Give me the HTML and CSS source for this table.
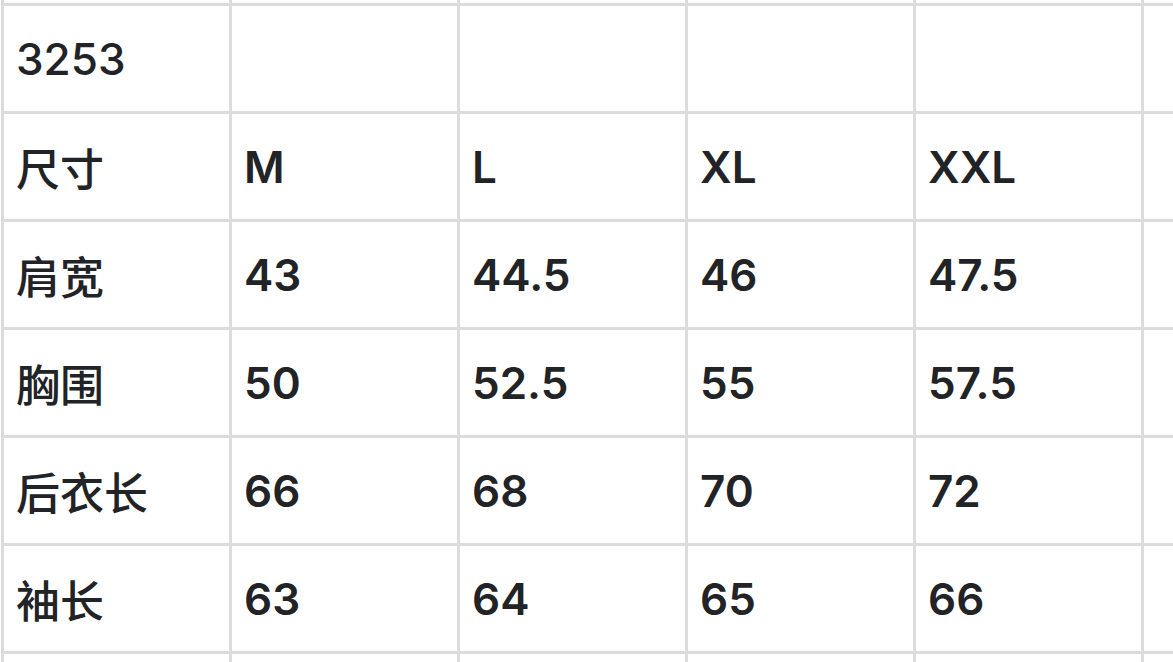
FILE: index.html
```html
<!DOCTYPE html>
<html lang="zh">
<head>
<meta charset="utf-8">
<link rel="stylesheet" href="styles.css">
</head>
<body>
<div class="frame">
<table class="size-table">
  <tr><td></td><td></td><td></td><td></td><td></td><td></td></tr>
  <tr><td class="code">3253</td><td></td><td></td><td></td><td></td><td></td></tr>
  <tr><td class="cjk">尺寸</td><td>M</td><td>L</td><td>XL</td><td>XXL</td><td></td></tr>
  <tr><td class="cjk">肩宽</td><td>43</td><td>44.5</td><td>46</td><td>47.5</td><td></td></tr>
  <tr><td class="cjk">胸围</td><td>50</td><td>52.5</td><td>55</td><td>57.5</td><td></td></tr>
  <tr><td class="cjk">后衣长</td><td>66</td><td>68</td><td>70</td><td>72</td><td></td></tr>
  <tr><td class="cjk">袖长</td><td>63</td><td>64</td><td>65</td><td>66</td><td></td></tr>
  <tr><td></td><td></td><td></td><td></td><td></td><td></td></tr>
</table>
</div>
</body>
</html>
```

FILE: styles.css
```css
html, body {
  margin: 0;
  padding: 0;
  background: #ffffff;
}

.frame {
  width: 1173px;
  height: 662px;
  overflow: hidden;
}

.size-table {
  margin-left: 1px;
  margin-top: -105px;
  border-collapse: separate;
  border-spacing: 3px;
  background: #dcdcdc;
  table-layout: fixed;
  width: 1371px;
  font-family: Inter, "Noto Sans CJK SC", sans-serif;
  font-size: 44px;
  font-weight: 600;
  color: #222326;
}

.size-table td {
  background: #ffffff;
  width: 225px;
  height: 105px;
  padding: 0 0 0 12px;
  box-sizing: border-box;
  vertical-align: middle;
  white-space: nowrap;
  line-height: 1;
}

.size-table td.code {
  font-weight: 500;
}

.size-table td.cjk {
  font-family: "Noto Sans CJK SC", sans-serif;
  font-weight: 500;
}
```
